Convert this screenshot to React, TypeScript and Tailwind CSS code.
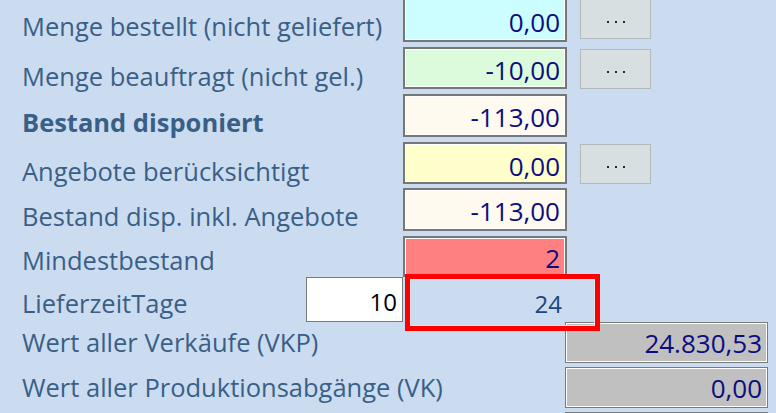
import * as React from "react";

type Row = {
  label: string;
  value: string;
  bold?: boolean;
  box: string;
  button?: boolean;
  rowCls: string;
  labelCls: string;
  valueCls: string;
};

const LABEL = "text-[25.5px] leading-none text-[#3a5f87] whitespace-nowrap";
const VALUE = "text-[26px] leading-none text-[#0c0c80]";

const rows: Row[] = [
  {
    label: "Menge bestellt (nicht geliefert)",
    value: "0,00",
    box: "bg-[#ccfeff]",
    button: true,
    rowCls: "h-[45px]",
    labelCls: "mb-[3px]",
    valueCls: "pb-[5px]",
  },
  {
    label: "Menge beauftragt (nicht gel.)",
    value: "-10,00",
    box: "bg-[#dcfadc]",
    button: true,
    rowCls: "mt-[5px] h-[42px]",
    labelCls: "mb-[0px]",
    valueCls: "pb-[4px]",
  },
  {
    label: "Bestand disponiert",
    value: "-113,00",
    bold: true,
    box: "bg-[#fffaf0]",
    rowCls: "mt-[5px] h-[43px]",
    labelCls: "mb-[2px]",
    valueCls: "pb-[5px]",
  },
  {
    label: "Angebote berücksichtigt",
    value: "0,00",
    box: "bg-[#ffffcc]",
    button: true,
    rowCls: "mt-[5px] h-[42px]",
    labelCls: "mb-[0px]",
    valueCls: "pb-[3px]",
  },
  {
    label: "Bestand disp. inkl. Angebote",
    value: "-113,00",
    box: "bg-[#fffaf0]",
    rowCls: "mt-[4px] h-[43px]",
    labelCls: "mb-[2px]",
    valueCls: "pb-[5px]",
  },
  {
    label: "Mindestbestand",
    value: "2",
    box: "bg-[#ff8080]",
    rowCls: "mt-[5px] h-[41px]",
    labelCls: "mb-[4px]",
    valueCls: "pb-[4px]",
  },
];

const grayRows = [
  { label: "Wert aller Verkäufe (VKP)", value: "24.830,53", rowCls: "h-[41px]" },
  { label: "Wert aller Produktionsabgänge (VK)", value: "0,00", rowCls: "mt-[4px] h-[41px]" },
  { label: "", value: "", rowCls: "mt-[4px] h-[41px]" },
];

function Dots() {
  return (
    <button
      type="button"
      className="mt-[2px] ml-[13px] flex h-[40px] w-[71px] items-center justify-center gap-[6px] border border-[#b3babd] bg-[#d8dfe0] pt-[6px]"
    >
      <span className="h-[2px] w-[2px] bg-[#1e2a36]" />
      <span className="h-[2px] w-[2px] bg-[#1e2a36]" />
      <span className="h-[2px] w-[2px] bg-[#1e2a36]" />
    </button>
  );
}

export default function App() {
  return (
    <div
      className="h-[413px] w-[776px] overflow-hidden bg-[#cbdcf0]"
      style={{ fontFamily: '"Open Sans", "Noto Sans", sans-serif' }}
    >
      <div className="-mt-[3px] flex flex-col">
        {rows.map((r) => (
          <div key={r.label} className={`flex items-start ${r.rowCls}`}>
            <div className="flex h-full w-[403px] items-end pl-[22px]">
              <span className={`${LABEL} ${r.bold ? "font-bold" : ""} ${r.labelCls}`}>{r.label}</span>
            </div>
            <div
              className={`flex h-full w-[164px] items-end justify-end border-2 border-[#777] pr-[5px] shadow-[inset_0_0_0_1px_#fff] ${r.box} ${r.valueCls}`}
            >
              <span className={VALUE}>{r.value}</span>
            </div>
            {r.button ? <Dots /> : null}
          </div>
        ))}

        {/* Lieferzeit */}
        <div className="relative flex h-[45px]">
          <div className="flex h-full w-[306px] items-end pl-[22px]">
            <span className={`${LABEL} mb-[6px]`}>LieferzeitTage</span>
          </div>
          <div className="flex h-full w-[97px] items-end justify-end border border-[#7a7a7a] bg-white pb-[7px] pr-[5px]">
            <span className="text-[24px] leading-none text-black">10</span>
          </div>
          <div className="absolute left-[405px] top-[-3px] z-10 h-[57px] w-[195px] border-[5px] border-[#ff0000]">
            <div className="flex h-full w-full items-end justify-end border border-[#dde6f0] pb-[9px] pr-[32px]">
              <span className="text-[24px] leading-none text-[#1d467f]">24</span>
            </div>
          </div>
        </div>

        {grayRows.map((r, i) => (
          <div key={i} className={`flex ${r.rowCls}`}>
            <div className="flex h-full w-[565px] items-end pl-[22px]">
              <span className={`${LABEL} mb-[8px]`}>{r.label}</span>
            </div>
            <div className="flex h-full w-[203px] items-end justify-end border border-[#7a7a7a] bg-[#c0c0c0] pb-[6px] pr-[5px] shadow-[inset_0_0_0_1px_#fff]">
              <span className={VALUE}>{r.value}</span>
            </div>
          </div>
        ))}
      </div>
    </div>
  );
}
